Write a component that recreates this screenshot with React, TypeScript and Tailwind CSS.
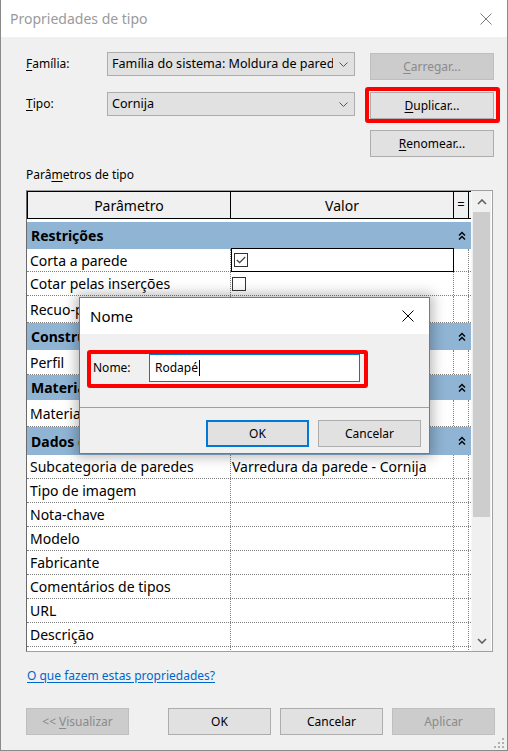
import React from 'react';

type Row = {
  kind: 'cat' | 'row';
  label: string;
  h: number;
  value?: string;
  check?: 'on' | 'off';
  selected?: boolean;
};

const rows: Row[] = [
  { kind: 'cat', label: 'Restrições', h: 27 },
  { kind: 'row', label: 'Corta a parede', h: 23, check: 'on', selected: true },
  { kind: 'row', label: 'Cotar pelas inserções', h: 24, check: 'off' },
  { kind: 'row', label: 'Recuo-padrão', h: 27 },
  { kind: 'cat', label: 'Construção', h: 27 },
  { kind: 'row', label: 'Perfil', h: 25 },
  { kind: 'cat', label: 'Materiais e acabamentos', h: 25 },
  { kind: 'row', label: 'Material', h: 27 },
  { kind: 'cat', label: 'Dados de identidade', h: 28 },
  { kind: 'row', label: 'Subcategoria de paredes', h: 24, value: 'Varredura da parede - Cornija' },
  { kind: 'row', label: 'Tipo de imagem', h: 24 },
  { kind: 'row', label: 'Nota-chave', h: 24 },
  { kind: 'row', label: 'Modelo', h: 24 },
  { kind: 'row', label: 'Fabricante', h: 24 },
  { kind: 'row', label: 'Comentários de tipos', h: 24 },
  { kind: 'row', label: 'URL', h: 24 },
  { kind: 'row', label: 'Descrição', h: 24 },
  { kind: 'row', label: '', h: 24 },
];

const ComboChevron = () => (
  <svg width="9" height="5" viewBox="0 0 9 5" className="shrink-0">
    <path d="M0.5 0.5 L4.5 4.5 L8.5 0.5" fill="none" stroke="#555" strokeWidth="1" />
  </svg>
);

const CloseX = ({ color }: { color: string }) => (
  <svg width="12" height="12" viewBox="0 0 12 12">
    <path d="M0.5 0.5 L11.5 11.5 M11.5 0.5 L0.5 11.5" fill="none" stroke={color} strokeWidth="1" />
  </svg>
);

const Collapse = () => (
  <svg width="8" height="10" viewBox="0 0 8 10">
    <path d="M1 4.5 L4 1.5 L7 4.5 M1 8.5 L4 5.5 L7 8.5" fill="none" stroke="#000" strokeWidth="1.4" />
  </svg>
);

const Checkbox = ({ on }: { on: boolean }) => (
  <div className="w-[14px] h-[14px] border border-[#333] bg-white flex items-center justify-center">
    {on && (
      <svg width="10" height="8" viewBox="0 0 10 8">
        <path d="M0.8 4 L3.6 6.6 L9.2 1" fill="none" stroke="#444" strokeWidth="1.3" />
      </svg>
    )}
  </div>
);

const WinButton = ({ children, disabled, className = '' }: { children: React.ReactNode; disabled?: boolean; className?: string }) => (
  <div
    className={`h-[27px] flex items-center justify-center text-[12px] border ${
      disabled ? 'bg-[#cccccc] border-[#bfbfbf] text-[#8a8a8a]' : 'bg-[#e1e1e1] border-[#adadad] text-black'
    } ${className}`}
  >
    {children}
  </div>
);

const Combo = ({ text }: { text: string }) => (
  <div className="w-[248px] h-[24px] bg-[#e1e1e1] border border-[#adadad] flex items-center pl-[4px] pr-[6px] gap-[6px]">
    <span className="flex-1 overflow-hidden whitespace-nowrap text-[12.6px]">{text}</span>
    <ComboChevron />
  </div>
);

function TableRow({ r }: { r: Row }) {
  if (r.kind === 'cat') {
    return (
      <div style={{ height: r.h }} className="bg-[#8fb4d4] flex items-center shrink-0">
        <span className="w-[427px] pl-[4px] font-bold text-[14px] whitespace-nowrap">{r.label}</span>
        <span className="w-[15px] flex justify-center"><Collapse /></span>
      </div>
    );
  }
  return (
    <div style={{ height: r.h }} className="flex bg-white border-b border-dotted border-[#808080] shrink-0">
      <div className="w-[204px] border-r border-dotted border-[#808080] flex items-center pl-[3px] text-[14px] whitespace-nowrap overflow-hidden">
        {r.label}
      </div>
      <div
        className={`w-[223px] flex items-center text-[14px] whitespace-nowrap overflow-hidden ${
          r.selected ? 'border border-black -my-px pl-[2px]' : 'border-r border-dotted border-[#808080] pl-px'
        }`}
      >
        {r.check ? <Checkbox on={r.check === 'on'} /> : r.value}
      </div>
      <div className="w-[15px] border-r border-dotted border-[#808080]" />
    </div>
  );
}

export default function App() {
  return (
    <div className="relative w-[508px] h-[751px] bg-[#f0f0f0] border-x border-b border-[#8a8a8a] font-['Noto_Sans',sans-serif] text-black overflow-hidden">
      {/* title bar */}
      <div className="h-[37px] bg-white flex items-center justify-between pl-[9px] pr-[15px]">
        <span className="text-[14px] text-[#9a9a9a]">Propriedades de tipo</span>
        <CloseX color="#7a7a7a" />
      </div>

      {/* family / type */}
      <div className="flex pl-[25px]">
        <div className="w-[329px] pt-[15px] flex flex-col gap-[16px]">
          <div className="flex items-center h-[24px]">
            <span className="w-[81px] text-[12px]"><span className="underline underline-offset-2">F</span>amília:</span>
            <Combo text="Família do sistema: Moldura de parede" />
          </div>
          <div className="flex items-center h-[24px]">
            <span className="w-[81px] text-[12px]"><span className="underline underline-offset-2">T</span>ipo:</span>
            <Combo text="Cornija" />
          </div>
        </div>
        <div className="ml-[15px] w-[124px] pt-[16px] flex flex-col">
          <WinButton disabled><span className="underline underline-offset-2">C</span>arregar...</WinButton>
          <div className="relative mt-[12px]">
            <WinButton><span className="underline underline-offset-2">D</span>uplicar...</WinButton>
            <div className="absolute -left-[5px] -top-[5px] -right-[6px] -bottom-[4px] border-[4px] border-[#ff0000] rounded-[3px]" />
          </div>
          <WinButton className="mt-[11px]"><span className="underline underline-offset-2">R</span>enomear...</WinButton>
        </div>
      </div>

      <div className="mt-[10px] pl-[25px] h-[16px] text-[12px] leading-[16px]">
        Parâ<span className="underline underline-offset-2">m</span>etros de tipo
      </div>

      {/* table */}
      <div className="mt-[7px] ml-[25px] w-[467px] h-[462px] border border-[#a0a0a0] border-l-[#6a6a6a] bg-white flex">
        <div className="w-[444px] flex flex-col overflow-hidden">
          <div className="h-[28px] flex bg-[#f0f0f0] border-y border-l border-black shrink-0 text-[14px]">
            <div className="w-[203px] border-r border-black flex items-center justify-center">Parâmetro</div>
            <div className="w-[223px] border-r border-black flex items-center justify-center">Valor</div>
            <div className="w-[15px] border-r border-black flex items-center justify-center text-[13px]">=</div>
          </div>
          <div className="h-[3px] shrink-0" />
          {rows.map((r, i) => (
            <TableRow key={i} r={r} />
          ))}
        </div>
        <div className="w-[20px] bg-[#f0f0f0] flex flex-col items-center border-l border-[#f7f7f7]">
          <div className="h-[21px] flex items-center justify-center">
            <svg width="10" height="6" viewBox="0 0 10 6">
              <path d="M1 5 L5 1 L9 5" fill="none" stroke="#606060" strokeWidth="1.6" />
            </svg>
          </div>
          <div className="w-[17px] h-[305px] bg-[#cdcdcd]" />
          <div className="flex-1" />
          <div className="h-[20px] flex items-center justify-center">
            <svg width="10" height="6" viewBox="0 0 10 6">
              <path d="M1 1 L5 5 L9 1" fill="none" stroke="#606060" strokeWidth="1.6" />
            </svg>
          </div>
        </div>
      </div>

      <div className="mt-[16px] pl-[26px] h-[16px] leading-[16px] text-[12px] text-[#0066cc] underline underline-offset-2">
        O que fazem estas propriedades?
      </div>

      <div className="mt-[24px] pl-[25px] flex">
        <WinButton disabled className="w-[103px]">&lt;&lt; <span className="underline underline-offset-2 ml-[3px]">V</span>isualizar</WinButton>
        <WinButton className="w-[103px] ml-[39px]">OK</WinButton>
        <WinButton className="w-[103px] ml-[9px]">Cancelar</WinButton>
        <WinButton disabled className="w-[103px] ml-[9px]">Aplicar</WinButton>
      </div>

      {/* resize grip */}
      <svg width="10" height="10" viewBox="0 0 10 10" className="absolute right-[3px] bottom-[2px]">
        <rect x="8" y="0" width="2" height="2" fill="#b0b0b0" />
        <rect x="4" y="4" width="2" height="2" fill="#b0b0b0" />
        <rect x="8" y="4" width="2" height="2" fill="#b0b0b0" />
        <rect x="0" y="8" width="2" height="2" fill="#b0b0b0" />
        <rect x="4" y="8" width="2" height="2" fill="#b0b0b0" />
        <rect x="8" y="8" width="2" height="2" fill="#b0b0b0" />
      </svg>

      {/* Nome dialog */}
      <div className="absolute left-[78px] top-[297px] w-[351px] h-[157px] bg-[#f0f0f0] border border-[#7a7a7a] shadow-[0_0_12px_3px_rgba(0,0,0,0.28)] flex flex-col">
        <div className="h-[36px] bg-white flex items-center justify-between pl-[10px] pr-[15px] shrink-0">
          <span className="text-[15px]">Nome</span>
          <CloseX color="#000" />
        </div>
        <div className="pt-[16px] pl-[7px]">
          <div className="w-[281px] h-[38px] border-[4px] border-[#ff0000] rounded-[3px] flex items-start">
            <span className="w-[58px] pl-[2px] h-[28px] flex items-center text-[12px]">Nome:</span>
            <div className="w-[211px] h-[28px] bg-white border border-[#0078d7] flex items-center pl-[5px] text-[12px]">
              Rodapé<span className="w-px h-[16px] bg-black ml-px" />
            </div>
          </div>
        </div>
        <div className="mt-[19px] h-px bg-[#a0a0a0]" />
        <div className="flex justify-end pr-[8px] pt-[12px] gap-[9px]">
          <div className="w-[103px] h-[27px] bg-[#e1e1e1] border-2 border-[#0078d7] flex items-center justify-center text-[12px]">OK</div>
          <div className="w-[103px] h-[27px] bg-[#e1e1e1] border border-[#adadad] flex items-center justify-center text-[12px]">Cancelar</div>
        </div>
      </div>
    </div>
  );
}
